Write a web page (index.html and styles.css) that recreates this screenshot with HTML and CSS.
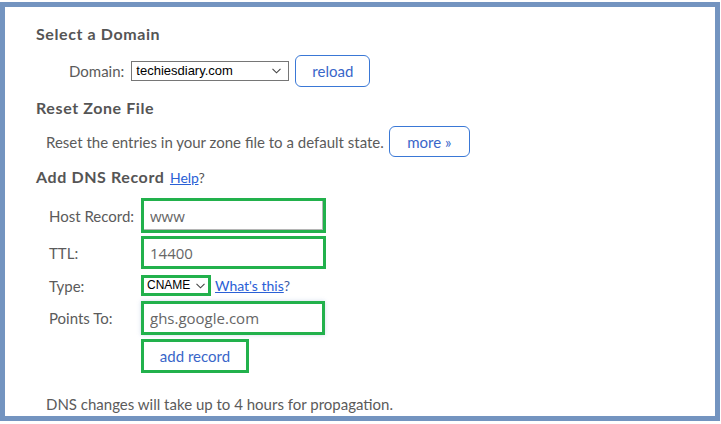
FILE: index.html
```html
<!DOCTYPE html>
<html>
<head>
  <title>DNS Zone Editor</title>
  <meta charset="utf-8">
  <link rel="stylesheet" href="styles.css">
</head>
<body>
  <!-- zone editor -->
  <div class="frame">
    <h3 class="section-title">Select a Domain</h3>
    <div class="domain-row">
      <label for="domain">Domain:</label>
      <span class="select-wrap domain-select">
        <select id="domain">
          <option>techiesdiary.com</option>
        </select>
        <svg class="chevron" width="9" height="6" viewBox="0 0 9 6"><path d="M0.5 0.8 L4.5 4.8 L8.5 0.8" fill="none" stroke="#444" stroke-width="1.1"/></svg>
      </span>
      <button class="btn">reload</button>
    </div>

    <h3 class="section-title">Reset Zone File</h3>
    <div class="reset-row">
      <span>Reset the entries in your zone file to a default state.</span>
      <button class="btn btn-more">more &raquo;</button>
    </div>

    <h3 class="section-title add-title">Add DNS Record <a href="#">Help</a><span class="q">?</span></h3>
    <div class="record-form">
      <div class="field host">
        <label for="host">Host Record:</label>
        <input type="text" id="host" value="www">
      </div>
      <div class="field ttl">
        <label for="ttl">TTL:</label>
        <input type="text" id="ttl" value="14400">
      </div>
      <div class="field type">
        <label for="type">Type:</label>
        <span class="select-wrap type-select">
          <select id="type">
            <option>CNAME</option>
          </select>
          <svg class="chevron" width="9" height="6" viewBox="0 0 9 6"><path d="M0.5 0.8 L4.5 4.8 L8.5 0.8" fill="none" stroke="#444" stroke-width="1.1"/></svg>
        </span>
        <a href="#" class="whats">What's this</a><span class="q">?</span>
      </div>
      <div class="field points">
        <label for="points">Points To:</label>
        <input type="text" id="points" value="ghs.google.com">
      </div>
      <div class="field submit">
        <button class="btn-add">add record</button>
      </div>
    </div>

    <p class="note">DNS changes will take up to 4 hours for propagation.</p>
  </div>
  <!-- end of zone editor -->
</body>
</html>
```

FILE: styles.css
```css
body {
  margin: 0;
  background: #fff;
  font-family: Lato, "Open Sans", sans-serif;
  color: #5b5b5b;
}
.frame {
  margin-top: 2px;
  width: 720px;
  height: 419px;
  box-sizing: border-box;
  border: 5px solid #7394c0;
  padding: 17px 0 0 31px;
  font-size: 15px;
}
.section-title {
  margin: 0;
  font-size: 16px;
  line-height: 20px;
  font-weight: bold;
  letter-spacing: 0.6px;
  color: #555;
}
.domain-row {
  display: flex;
  align-items: center;
  margin: 11px 0 11px 33px;
  height: 32px;
}
.domain-row label {
  margin-right: 7px;
}
.select-wrap {
  position: relative;
  display: inline-block;
}
.select-wrap select {
  -webkit-appearance: none;
  appearance: none;
  display: block;
  box-sizing: border-box;
  margin: 0;
  background: #fff;
  color: #000;
  font-family: "Liberation Sans", Arial, sans-serif;
  font-size: 13px;
  border-radius: 0;
  outline: none;
}
.chevron {
  position: absolute;
  top: 50%;
  margin-top: -3px;
  pointer-events: none;
}
.domain-select select {
  width: 158px;
  height: 20px;
  border: 1px solid #767676;
  padding: 0 0 0 4px;
  line-height: 18px;
}
.domain-select .chevron {
  right: 8px;
}
.btn {
  height: 32px;
  margin-left: 6px;
  padding: 0 16px;
  background: #fff;
  border: 1px solid #3a78d6;
  border-radius: 6px;
  color: #3966c9;
  font-family: Lato, "Open Sans", sans-serif;
  font-size: 15px;
  cursor: pointer;
}
.reset-row {
  display: flex;
  align-items: center;
  margin: 8px 0 10px 10px;
  height: 31px;
}
.reset-row .btn-more {
  height: 31px;
  width: 81px;
  padding: 0;
  margin-left: 5px;
}
.add-title a,
.whats {
  color: #2a60d6;
  font-weight: normal;
  font-size: 14px;
  letter-spacing: 0;
  text-decoration: underline;
}
.add-title a {
  margin-left: 1px;
}
.q {
  font-weight: normal;
  font-size: 14px;
  letter-spacing: 0;
  color: #555;
}
.record-form {
  margin: 10px 0 0 13px;
}
.field {
  display: flex;
  align-items: center;
}
.field label {
  width: 92px;
  flex: none;
}
.field input {
  box-sizing: border-box;
  margin: 0;
  padding: 0 0 0 6px;
  border: 3px solid #22b14c;
  background: #fff;
  color: #666;
  font-family: "Open Sans", "DejaVu Sans", sans-serif;
  font-size: 15px;
  outline: none;
}
.host input {
  width: 185px;
  height: 35px;
  box-shadow: inset -1px -1px 0 #b5b5b5;
}
.ttl {
  margin-top: 3px;
}
.ttl input {
  width: 185px;
  height: 33px;
}
.type {
  margin-top: 6px;
}
.type-select select {
  width: 70px;
  height: 21px;
  border: 3px solid #22b14c;
  padding: 0 0 0 3px;
  font-size: 12px;
  line-height: 15px;
}
.type-select .chevron {
  right: 6px;
}
.whats {
  margin-left: 4px;
}
.type .q {
  color: #3c5aa0;
}
.points {
  margin-top: 5px;
}
.points input {
  width: 184px;
  height: 34px;
  box-shadow: 0 0 4px rgba(120, 150, 200, 0.35);
}
.submit {
  margin-top: 4px;
  padding-left: 92px;
}
.btn-add {
  width: 108px;
  height: 34px;
  margin: 0;
  padding: 0;
  background: #fff;
  border: 3px solid #22b14c;
  color: #3966c9;
  font-family: Lato, "Open Sans", sans-serif;
  font-size: 15px;
  cursor: pointer;
}
.note {
  margin: 21px 0 0 10px;
  line-height: 20px;
}
```
